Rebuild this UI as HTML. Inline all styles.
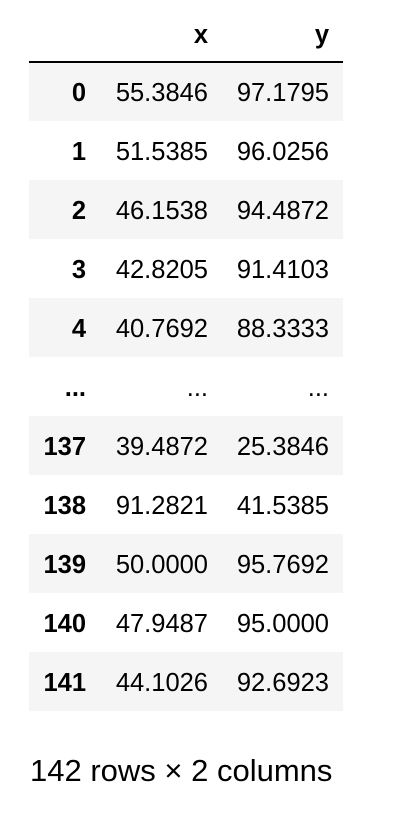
<!DOCTYPE html>
<html><head><style>
body{margin:0;background:#fff;font-family:"Liberation Sans",Arial,sans-serif;color:#000;}
table{position:absolute;left:29px;top:8px;border-collapse:collapse;font-size:25.5px;}
th,td{text-align:right;padding:3px 0 0 0;height:59px;box-sizing:border-box;}
thead th{height:54px;padding-top:1px;border-bottom:2px solid #000;font-weight:bold;}
tbody th{font-weight:bold;}
.c0{width:57px;} .c1{width:122px;} .c2{width:121px;}
tbody tr:nth-child(odd){background:#f5f5f5;}
.pad{width:14px;}
.foot{position:absolute;left:30px;top:753px;font-size:31px;}
</style></head><body>
<table>
<thead><tr><th class="c0"></th><th class="c1">x</th><th class="c2">y</th><th class="pad"></th></tr></thead>
<tbody>
<tr><th>0</th><td>55.3846</td><td>97.1795</td><td></td></tr>
<tr><th>1</th><td>51.5385</td><td>96.0256</td><td></td></tr>
<tr><th>2</th><td>46.1538</td><td>94.4872</td><td></td></tr>
<tr><th>3</th><td>42.8205</td><td>91.4103</td><td></td></tr>
<tr><th>4</th><td>40.7692</td><td>88.3333</td><td></td></tr>
<tr><th>...</th><td>...</td><td>...</td><td></td></tr>
<tr><th>137</th><td>39.4872</td><td>25.3846</td><td></td></tr>
<tr><th>138</th><td>91.2821</td><td>41.5385</td><td></td></tr>
<tr><th>139</th><td>50.0000</td><td>95.7692</td><td></td></tr>
<tr><th>140</th><td>47.9487</td><td>95.0000</td><td></td></tr>
<tr><th>141</th><td>44.1026</td><td>92.6923</td><td></td></tr>
</tbody></table>
<div class="foot">142 rows × 2 columns</div>
</body></html>
